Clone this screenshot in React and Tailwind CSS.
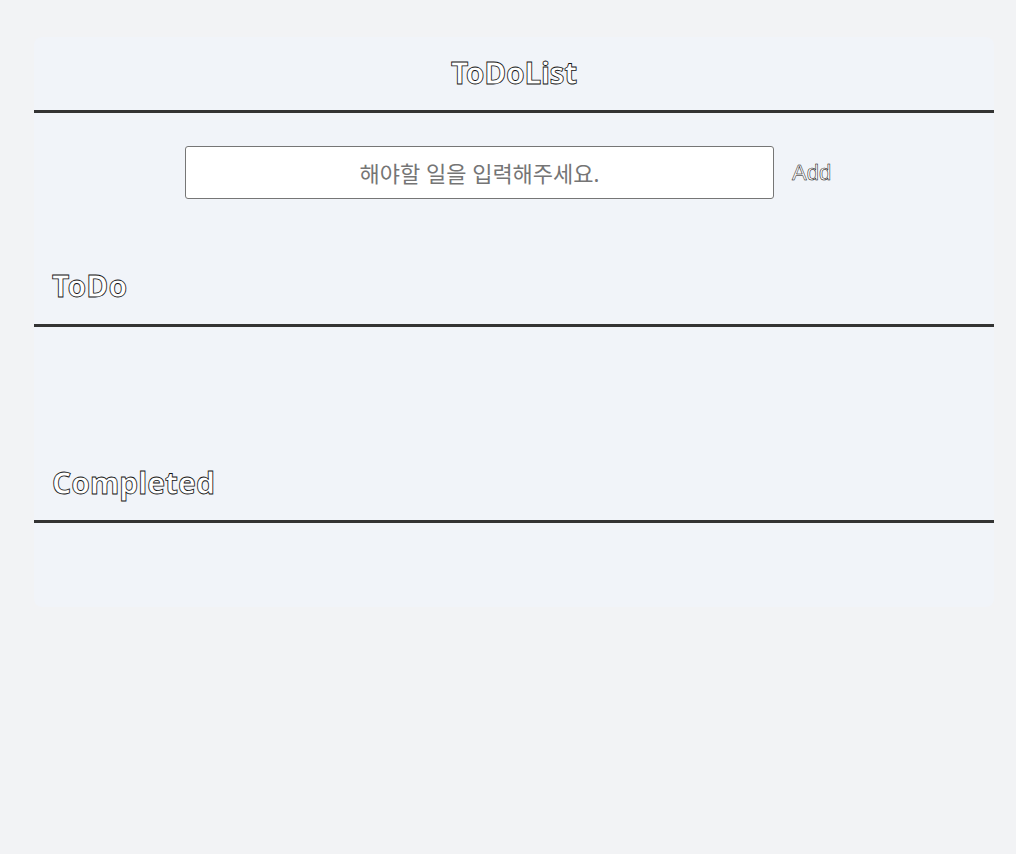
export default function App() {
  const outline = "text-white [-webkit-text-stroke:0.8px_#111]";
  return (
    <div className="min-h-[854px] w-full bg-[#f2f3f5] pt-[37px] pl-[34px]" style={{ fontFamily: '"Noto Sans", "Noto Sans CJK KR", sans-serif' }}>
      <div className="w-[960px] h-[570px] rounded-lg bg-[#f1f4f9] flex flex-col">
        <div className="h-[76px] border-b-[3px] border-[#333] flex items-center justify-center pb-[2px]">
          <h1 className={`text-[30px] font-bold leading-none tracking-[-0.3px] ${outline}`}>ToDoList</h1>
        </div>
        <div className="flex items-center pt-[33px] pl-[151px]">
          <input
            className="w-[589px] h-[53px] rounded-[3px] border border-[#767676] bg-white text-center text-[22px] outline-none placeholder:text-[#757575]"
            placeholder="해야할 일을 입력해주세요."
          />
          <button className="ml-[18px] text-[22px] text-white [-webkit-text-stroke:0.5px_#000]" style={{ fontFamily: '"Liberation Sans", Arial, sans-serif' }}>
            Add
          </button>
        </div>
        <div className="mt-[65px] h-[63px] border-b-[3px] border-[#333] flex items-center pl-[18px] pb-[16px]">
          <h2 className={`text-[30px] font-bold leading-none tracking-[0.2px] ${outline}`}>ToDo</h2>
        </div>
        <div className="h-[133px]"></div>
        <div className="h-[63px] border-b-[3px] border-[#333] flex items-center pl-[18px] pb-[14px]">
          <h2 className={`text-[30px] font-bold leading-none ${outline}`}>Completed</h2>
        </div>
      </div>
    </div>
  );
}
